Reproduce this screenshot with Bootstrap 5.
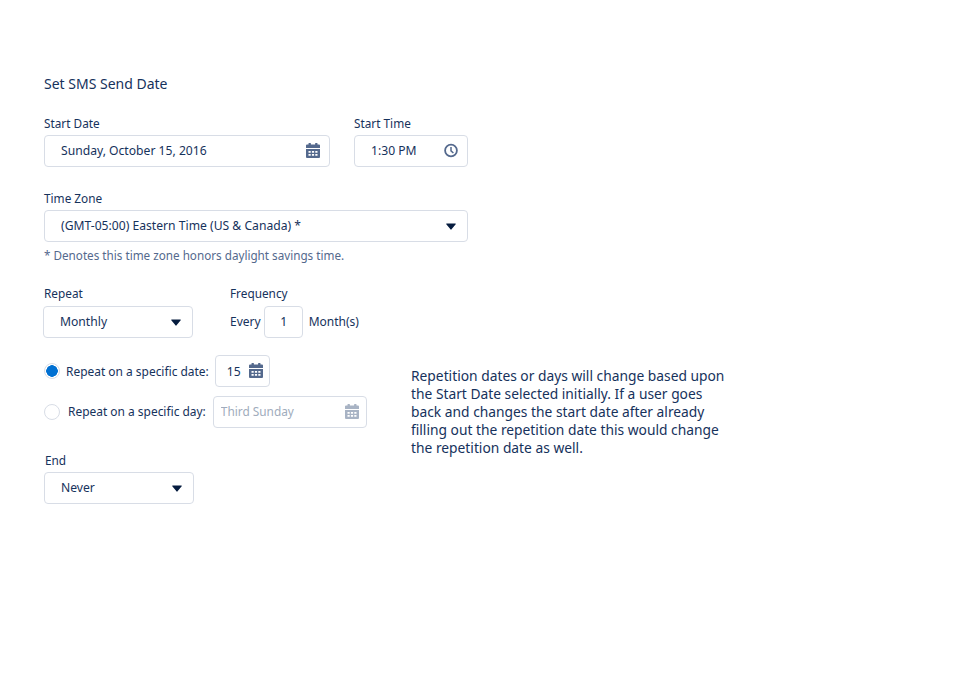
<!DOCTYPE html>
<html lang="en">
<head>
<meta charset="utf-8">
<title>Set SMS Send Date</title>
<link href="https://cdn.jsdelivr.net/npm/bootstrap@5.3.0/dist/css/bootstrap.min.css" rel="stylesheet">
<style>
body { font-family: "Noto Sans", "Open Sans", sans-serif; font-size: 12px; color: #16325c; background: #fff; }
.sheet { padding: 76px 0 0 44px; width: 964px; height: 681px; overflow: hidden; }
.sheet-title { font-size: 14px; line-height: 15px; font-weight: 400; margin: 0 0 25px; }
.fld-label { display: block; font-size: 11.8px; line-height: 14px; margin: 0 0 5px; }
.fld-label.label-wide { margin-bottom: 6px; }
.sheet .form-control, .sheet .form-select {
  height: 32px; min-height: 32px; font-size: 12.15px; line-height: 19px; color: #16325c;
  border: 1px solid #d8dde6; border-radius: 4px; padding: 3px 36px 5px 16px; box-shadow: none;
}
.sheet .form-select {
  background-size: 10px 6.5px; background-position: right 11px center;
  background-image: url("data:image/svg+xml,%3Csvg xmlns='http://www.w3.org/2000/svg' viewBox='0 0 12 8'%3E%3Cpath fill='%23061c3f' d='M.6.5h10.8a.5.5 0 0 1 .4.8L6.400 7.400a.5.5 0 0 1-.8 0L.2 1.300A.5.5 0 0 1 .6.5z'/%3E%3C/svg%3E");
}
.ctl-wrap { position: relative; }
.ctl-icon { position: absolute; right: 10px; top: 8px; width: 14px; height: 15px; fill: #54698d; }
.w-date { width: 286px; }
.w-time { width: 114px; }
.w-zone { width: 424px; margin-top: 24px; }
.w-pick { width: 150px; }
.gap-cols { column-gap: 24px; }
.help-line { color: #54698d; font-size: 11.7px; line-height: 16px; margin: 5px 0 23px; }
.shift-left { margin-left: -1px; }
.label-nudge { margin-left: 1px; }
.freq-col { margin-left: 37px; }
.sheet .freq-input { width: 39px; padding: 3px 0 5px 1px; text-align: center; margin: 0 6px 0 4px; }
.every-text { margin-right: -1px; }
.radio-block { margin-top: 17px; width: 367px; }
.radio-line { height: 32px; margin-bottom: 9px; }
.sheet .form-check-input {
  width: 16px; height: 16px; margin: 0; flex: none; background-color: #fff; border: 1px solid #d8dde6; box-shadow: none;
}
.sheet .form-check-input:checked { background-image: radial-gradient(circle, #0070d2 0, #0070d2 5.5px, #fff 6px); border-color: #d8dde6; }
.radio-text { margin: 0 6px; padding-top: 2px; white-space: nowrap; line-height: 16px; font-size: 11.95px; }
.radio-text-b { margin: 0 8px; white-space: nowrap; line-height: 16px; font-size: 11.95px; }
.w-num { width: 55px; }
.sheet .w-num .form-control { padding: 4px 0 4px 11px; }
.sheet .w-num .ctl-icon { right: 7px; }
.w-day { width: 154px; margin-left: -1px; }
.sheet .w-day .form-control { padding-left: 7px; background: #fff; color: #a0acbc; font-size: 11.85px; }
.sheet .w-day .ctl-icon { fill: #a8b3c4; right: 8px; }
.end-block { margin-top: 25px; }
.side-note { margin: 29px 0 0 0; width: 318px; font-size: 13.8px; line-height: 18px; }
</style>
</head>
<body>
<svg width="0" height="0" class="position-absolute">
  <symbol id="cal" viewBox="0 0 14 15">
    <path d="M3 0h1.400a.5.5 0 0 1 .5.5V1.500h4.200V.5a.5.5 0 0 1 .5-.5H11a.5.5 0 0 1 .5.5v1H13a1 1 0 0 1 1 1V5H0V2.500a1 1 0 0 1 1-1h1.500V.5A.5.5 0 0 1 3 0z"/>
    <path fill-rule="evenodd" d="M0 6h14v8a1 1 0 0 1-1 1H1a1 1 0 0 1-1-1V6zm2.500 2v1.800h2.200V8H2.500zm3.400 0v1.800h2.200V8H5.900zm3.400 0v1.800h2.200V8H9.300zm-6.800 2.900v1.800h2.200v-1.800H2.500zm3.400 0v1.800h2.200v-1.800H5.900zm3.400 0v1.800h2.200v-1.800H9.300z"/>
  </symbol>
  <symbol id="clk" viewBox="0 0 14 15">
    <circle cx="7" cy="7.500" r="5.900" fill="none" stroke="#54698d" stroke-width="1.800"/>
    <path d="M7 4v3.800l2.400 2.200" fill="none" stroke="#54698d" stroke-width="1.500"/>
  </symbol>
</svg>

<main class="sheet">
  <h1 class="sheet-title">Set SMS Send Date</h1>

  <div class="d-flex gap-cols">
    <div class="w-date">
      <label class="fld-label" for="startDate">Start Date</label>
      <div class="ctl-wrap">
        <input id="startDate" class="form-control" type="text" value="Sunday, October 15, 2016">
        <svg class="ctl-icon"><use href="#cal"/></svg>
      </div>
    </div>
    <div class="w-time">
      <label class="fld-label" for="startTime">Start Time</label>
      <div class="ctl-wrap">
        <input id="startTime" class="form-control" type="text" value="1:30 PM">
        <svg class="ctl-icon"><use href="#clk"/></svg>
      </div>
    </div>
  </div>

  <div class="w-zone">
    <label class="fld-label" for="zone">Time Zone</label>
    <select id="zone" class="form-select"><option>(GMT-05:00) Eastern Time (US &amp; Canada) *</option></select>
    <p class="help-line">* Denotes this time zone honors daylight savings time.</p>
  </div>

  <div class="d-flex">
    <div class="w-pick shift-left">
      <label class="fld-label label-nudge label-wide" for="repeat">Repeat</label>
      <select id="repeat" class="form-select"><option>Monthly</option></select>
    </div>
    <div class="freq-col">
      <label class="fld-label label-wide" for="freq">Frequency</label>
      <div class="d-flex align-items-center">
        <span class="every-text">Every</span>
        <input id="freq" class="form-control freq-input" type="text" value="1">
        <span>Month(s)</span>
      </div>
    </div>
  </div>

  <div class="d-flex align-items-start">
    <div class="flex-shrink-0">
      <div class="radio-block">
        <div class="d-flex align-items-center radio-line">
          <input class="form-check-input" type="radio" name="rep" id="rDate" checked>
          <label class="radio-text" for="rDate">Repeat on a specific date:</label>
          <div class="ctl-wrap w-num">
            <input class="form-control" type="text" value="15" aria-label="Day of month">
            <svg class="ctl-icon"><use href="#cal"/></svg>
          </div>
        </div>
        <div class="d-flex align-items-center radio-line">
          <input class="form-check-input" type="radio" name="rep" id="rDay">
          <label class="radio-text-b" for="rDay">Repeat on a specific day:</label>
          <div class="ctl-wrap w-day">
            <input class="form-control" type="text" value="Third Sunday" disabled aria-label="Day of week">
            <svg class="ctl-icon"><use href="#cal"/></svg>
          </div>
        </div>
      </div>
      <div class="w-pick end-block">
        <label class="fld-label label-nudge" for="end">End</label>
        <select id="end" class="form-select"><option>Never</option></select>
      </div>
    </div>
    <p class="side-note">Repetition dates or days will change based upon the Start Date selected initially. If a user goes back and changes the start date after already filling out the repetition date this would change the repetition date as well.</p>
  </div>
</main>
</body>
</html>
